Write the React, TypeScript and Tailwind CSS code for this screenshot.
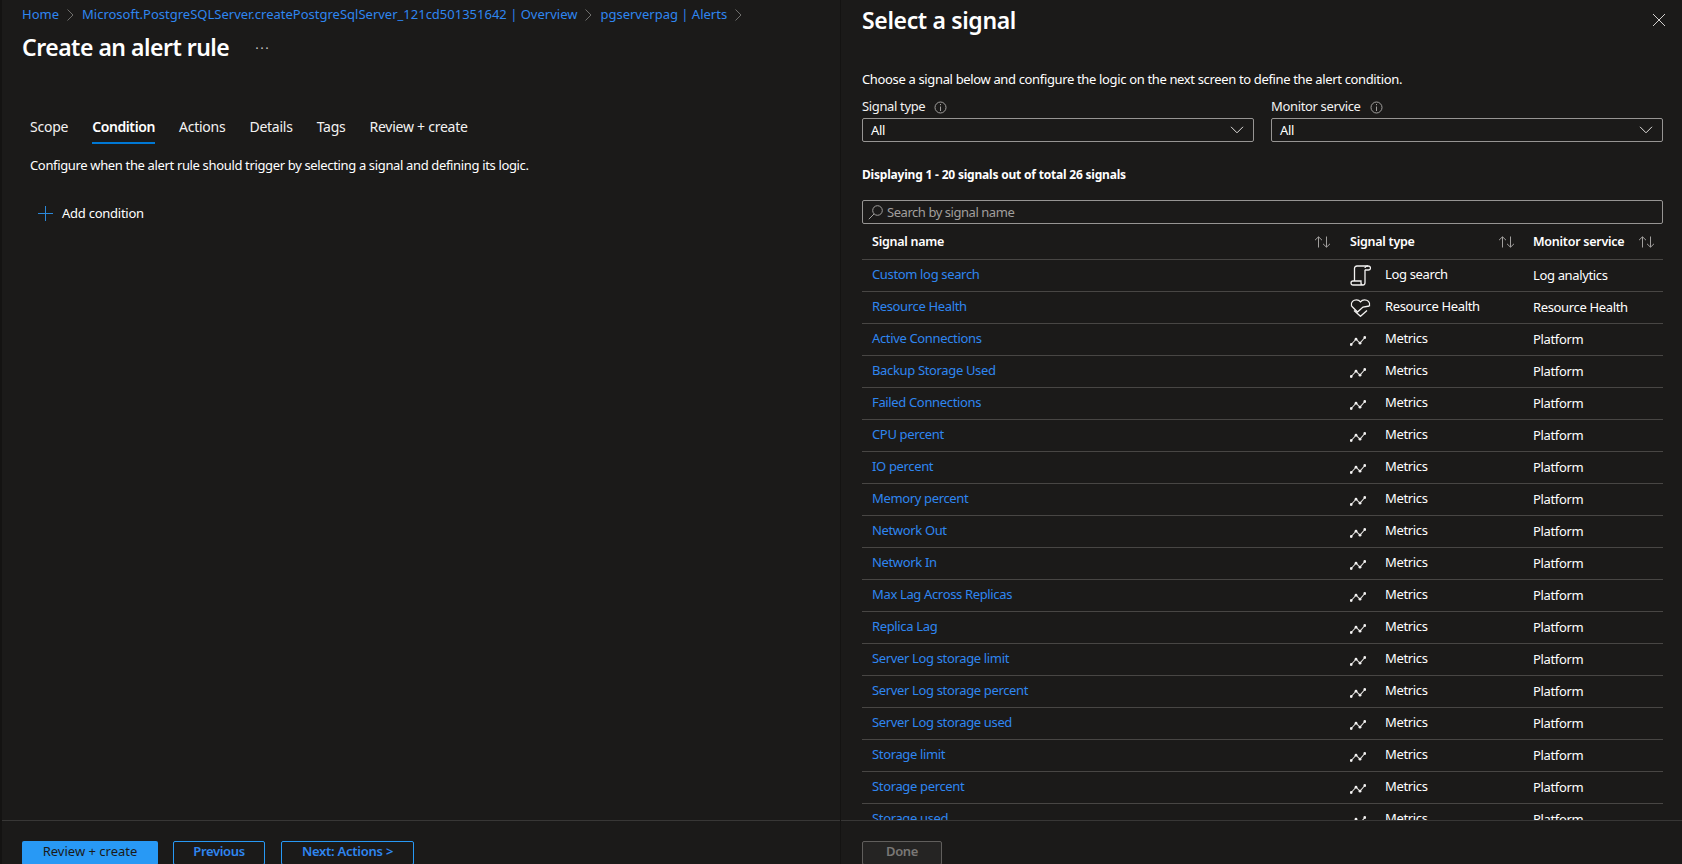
const tabs = ["Scope", "Condition", "Actions", "Details", "Tags", "Review + create"];

const signals: [string, string, string][] = [
  ["Custom log search", "Log search", "Log analytics"],
  ["Resource Health", "Resource Health", "Resource Health"],
  ["Active Connections", "Metrics", "Platform"],
  ["Backup Storage Used", "Metrics", "Platform"],
  ["Failed Connections", "Metrics", "Platform"],
  ["CPU percent", "Metrics", "Platform"],
  ["IO percent", "Metrics", "Platform"],
  ["Memory percent", "Metrics", "Platform"],
  ["Network Out", "Metrics", "Platform"],
  ["Network In", "Metrics", "Platform"],
  ["Max Lag Across Replicas", "Metrics", "Platform"],
  ["Replica Lag", "Metrics", "Platform"],
  ["Server Log storage limit", "Metrics", "Platform"],
  ["Server Log storage percent", "Metrics", "Platform"],
  ["Server Log storage used", "Metrics", "Platform"],
  ["Storage limit", "Metrics", "Platform"],
  ["Storage percent", "Metrics", "Platform"],
  ["Storage used", "Metrics", "Platform"],
];

function Crumb() {
  return (
    <svg width="7" height="12" viewBox="0 0 7 12" fill="none" stroke="#6f6e6c" strokeWidth="1" className="shrink-0">
      <path d="M0.5 0.5 L6 6 L0.5 11.5" />
    </svg>
  );
}

function Info() {
  return (
    <svg width="13" height="13" viewBox="0 0 13 13" fill="none" stroke="#a19f9d" strokeWidth="1">
      <circle cx="6.5" cy="6.5" r="5.5" />
      <path d="M6.5 5.5 V10 M6.5 3 V4.2" />
    </svg>
  );
}

function Chevron() {
  return (
    <svg width="14" height="8" viewBox="0 0 14 8" fill="none" stroke="#e1dfdd" strokeWidth="1">
      <path d="M1 0.8 L7 6.8 L13 0.8" />
    </svg>
  );
}

function SortArrows() {
  return (
    <svg width="17" height="12" viewBox="0 0 17 12" fill="none" stroke="#a19f9d" strokeWidth="1">
      <path d="M4.5 11.5 V1 M1 4.2 L4.5 0.8 L8 4.2" />
      <path d="M12.5 0.5 V11 M9 7.8 L12.5 11.2 L16 7.8" />
    </svg>
  );
}

function TypeIcon({ type }: { type: string }) {
  if (type === "Log search") {
    return (
      <svg width="21" height="21" viewBox="0 0 21 21" fill="none" stroke="#f3f2f1" strokeWidth="1.3">
        <path d="M4.5 16 V3.5 C4.5 2 5.5 1 7 1 H18" />
        <path d="M15 4.8 V17.5 C15 19 14 20 13 20 H3 C1.8 20 1 19.2 1 18 C1 16.8 1.8 16 3 16 H11 V18 C11 19.2 11.8 20 13 20" />
        <path d="M15 3 C15 1.8 16.5 1 18 1 C19.5 1 20.5 2 20.5 3 C20.5 4 19.5 5 18.5 5 H15" />
      </svg>
    );
  }
  if (type === "Resource Health") {
    return (
      <svg width="21" height="18" viewBox="0 0 21 18" fill="none" stroke="#f3f2f1" strokeWidth="1.3">
        <path d="M1.5 7 C0.5 3 3.5 0.8 6.5 0.8 C8.3 0.8 9.5 1.5 10.5 2.8 C11.5 1.5 12.7 0.8 14.5 0.8 C17.5 0.8 20.5 3 19.5 7" />
        <path d="M1.5 7 L7.5 13 L13 8 L19.5 7" />
        <path d="M4 11.5 L10.5 17.3 L17 11.5" />
      </svg>
    );
  }
  return (
    <svg width="16" height="10" viewBox="0 0 16 10" fill="none" stroke="#e1dfdd" strokeWidth="1.1" className="mt-[3px]">
      <path d="M1.2 8.5 L6 3.2 L10 7.2 L14.8 1.5" />
      <circle cx="1.2" cy="8.5" r="1.4" fill="#f3f2f1" stroke="none" />
      <circle cx="6" cy="3.2" r="1.4" fill="#f3f2f1" stroke="none" />
      <circle cx="10" cy="7.2" r="1.4" fill="#f3f2f1" stroke="none" />
      <circle cx="14.8" cy="1.5" r="1.4" fill="#f3f2f1" stroke="none" />
    </svg>
  );
}

function Dropdown() {
  return (
    <div className="flex h-6 items-center justify-between rounded-[2px] border border-[#979593] pl-2 pr-[9px] text-white">
      <span className="pt-px">All</span>
      <Chevron />
    </div>
  );
}

export default function App() {
  return (
    <div
      className="flex h-screen overflow-hidden bg-[#1b1a19] text-[13px] tracking-[-0.35px] text-white"
      style={{ fontFamily: '"Noto Sans", "Open Sans", sans-serif' }}
    >
      {/* blade behind */}
      <div className="flex w-[841px] shrink-0 flex-col border-l-2 border-r border-l-[#141312] border-r-[#141312]">
        <div className="flex-1 pl-[20px]">
          <div className="flex h-[30px] items-center gap-2 tracking-normal text-[#2f86f0]">
            <span>Home</span>
            <Crumb />
            <span>Microsoft.PostgreSQLServer.createPostgreSqlServer_121cd501351642 | Overview</span>
            <Crumb />
            <span>pgserverpag | Alerts</span>
            <Crumb />
          </div>
          <div className="mt-[2px] flex h-[30px] items-center">
            <h1 className="text-[23px] font-semibold tracking-[-0.5px]">Create an alert rule</h1>
            <span className="ml-[26px] pt-[3px] tracking-[1.5px] text-[#c8c6c4]">···</span>
          </div>
          <div className="pl-[8px]">
            <div className="mt-[51px] flex gap-[24px] text-[14px] tracking-[-0.25px]">
              {tabs.map((t) => (
                <div
                  key={t}
                  className={
                    t === "Condition"
                      ? "flex h-[31px] items-center border-b-2 border-[#0078d4] pb-[2px] font-semibold tracking-[-0.4px]"
                      : "flex h-[31px] items-center pb-[4px] text-[#f3f2f1]"
                  }
                >
                  {t}
                </div>
              ))}
            </div>
            <p className="mt-[12px] leading-[18px]">
              Configure when the alert rule should trigger by selecting a signal and defining its logic.
            </p>
            <div className="mt-[30px] flex items-center gap-[9px] pl-2 leading-[18px] tracking-[-0.25px]">
              <svg width="15" height="15" viewBox="0 0 15 15" stroke="#2b88d8" strokeWidth="1">
                <path d="M7.5 0 V15 M0 7.5 H15" />
              </svg>
              <span>Add condition</span>
            </div>
          </div>
        </div>
        <div className="h-[44px] shrink-0 border-t border-[#383736] pl-[20px] pt-[20px]">
          <div className="flex gap-[15px] font-semibold">
            <button className="h-6 w-[136px] shrink-0 rounded-[2px] bg-[#2899f5] pb-[2px] text-[13px] font-normal tracking-normal text-[#1b1a19]">
              Review + create
            </button>
            <button className="h-6 w-[92px] shrink-0 rounded-[2px] border border-[#2899f5] pb-[2px] text-[#2f86f0]">
              Previous
            </button>
            <button className="ml-px h-6 w-[133px] shrink-0 rounded-[2px] border border-[#2899f5] pb-[2px] tracking-[-0.25px] text-[#2f86f0]">
              Next: Actions &gt;
            </button>
          </div>
        </div>
      </div>

      {/* context pane */}
      <div className="flex min-w-0 flex-1 flex-col">
        <div className="min-h-0 flex-1 overflow-hidden pl-[21px] pr-[19px]">
          <div className="flex h-[40px] items-center justify-between">
            <h2 className="text-[23px] font-semibold tracking-[-0.35px]">Select a signal</h2>
            <svg width="12" height="12" viewBox="0 0 12 12" stroke="#d2d0ce" strokeWidth="1" className="mr-[-2px]">
              <path d="M0 0 L12 12 M12 0 L0 12" />
            </svg>
          </div>
          <p className="mt-[30px] leading-[18px]">
            Choose a signal below and configure the logic on the next screen to define the alert condition.
          </p>
          <div className="mt-[10px] grid grid-cols-2 gap-[17px]">
            <div>
              <div className="mb-[2px] flex h-[18px] items-center gap-[9px] text-[#f3f2f1]">
                Signal type <Info />
              </div>
              <Dropdown />
            </div>
            <div>
              <div className="mb-[2px] flex h-[18px] items-center gap-[9px] text-[#f3f2f1]">
                Monitor service <Info />
              </div>
              <Dropdown />
            </div>
          </div>
          <p className="mt-[24px] text-[12px] font-bold leading-[18px] tracking-[-0.2px]">
            Displaying 1 - 20 signals out of total 26 signals
          </p>
          <div className="mt-[16px] flex h-6 items-center gap-[4px] rounded-[2px] border border-[#979593] pl-[5px] tracking-[-0.45px] text-[#a19f9d]">
            <svg width="15" height="15" viewBox="0 0 15 15" fill="none" stroke="#a19f9d" strokeWidth="1">
              <circle cx="9.5" cy="5.5" r="4.8" />
              <path d="M6 9 L0.8 14.2" />
            </svg>
            <span className="pt-px">Search by signal name</span>
          </div>

          <div className="flex h-[36px] items-center border-b border-[#484644] font-semibold tracking-[-0.25px]">
            <div className="flex w-[469px] items-center justify-between pl-[10px]">
              <span className="pt-[2px] text-[12.5px]">Signal name</span>
              <SortArrows />
            </div>
            <div className="flex w-[184px] items-center justify-between pl-[19px]">
              <span className="pt-[2px] text-[12.5px]">Signal type</span>
              <SortArrows />
            </div>
            <div className="flex w-[148px] items-center justify-between pl-[18px] pr-[8px]">
              <span className="pt-[2px] text-[12.5px]">Monitor service</span>
              <SortArrows />
            </div>
          </div>
          {signals.map(([name, type, service]) => (
            <div key={name} className="flex h-[32px] items-center border-b border-[#484644]">
              <div className="w-[488px] pb-px pl-[10px] text-[#2f86f0]">{name}</div>
              <div className="flex w-[183px] items-center">
                <div className="flex w-[35px] justify-start">
                  <TypeIcon type={type} />
                </div>
                <span className="pb-px">{type}</span>
              </div>
              <div className="pt-px">{service}</div>
            </div>
          ))}
        </div>
        <div className="h-[44px] shrink-0 border-t border-[#383736] pl-[21px] pt-[20px]">
          <button className="h-6 w-[80px] rounded-[2px] border border-[#605e5c] bg-[#252423] pb-[2px] font-semibold text-[#797775]">
            Done
          </button>
        </div>
      </div>
    </div>
  );
}
